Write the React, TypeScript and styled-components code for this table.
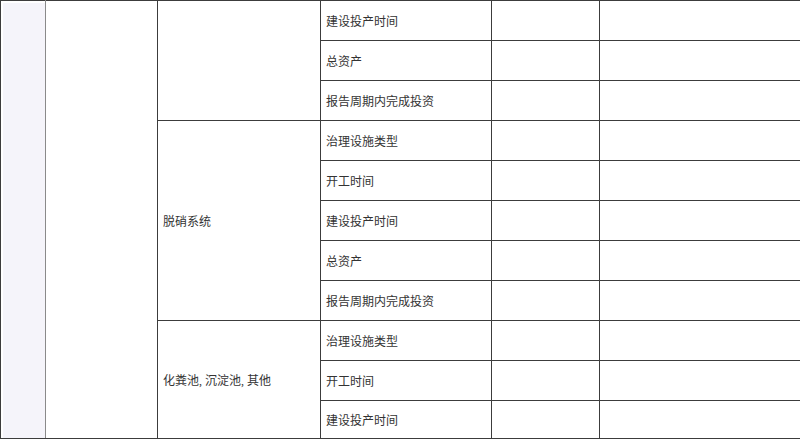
import React, {FC} from 'react';
import styled, {createGlobalStyle} from 'styled-components';

const GlobalStyle = createGlobalStyle`
    html, body {
        margin: 0;
        padding: 0;
        background: #fff;
    }
    body {
        font-family: "Liberation Serif", "Noto Sans CJK SC", serif;
    }
`;

const Page = styled.div`
    width: 800px;
    height: 440px;
    overflow: hidden;
`;

const Grid = styled.table`
    width: 800px;
    table-layout: fixed;
    border-collapse: collapse;
    border: 1px solid #3c3c3c;
    font-size: 12px;
    color: #333;
`;

const Col = styled.col<{$width: number}>`
    width: ${p => p.$width}px;
`;

const Row = styled.tr<{$last?: boolean}>`
    height: ${p => (p.$last ? 38 : 40)}px;
`;

const Cell = styled.td`
    border: 1px solid #3c3c3c;
    padding: 0 5px;
    vertical-align: middle;
    white-space: nowrap;
    font-weight: normal;
`;

const IndexCell = styled(Cell)`
    background: #f5f4fa;
    box-shadow: inset 1px 1px 0 1px #fff;
    border-right-color: #8a8a8a;
`;

type Group = {
    name: string;
    items: string[];
};

const columns = [45, 112, 163, 171, 108, 201];

const groups: Group[] = [
    {name: '', items: ['建设投产时间', '总资产', '报告周期内完成投资']},
    {name: '脱硝系统', items: ['治理设施类型', '开工时间', '建设投产时间', '总资产', '报告周期内完成投资']},
    {name: '化粪池, 沉淀池, 其他', items: ['治理设施类型', '开工时间', '建设投产时间']},
];

const totalRows = groups.reduce((sum, group) => sum + group.items.length, 0);

const App: FC = () => {
    let rowIndex = 0;

    return (
        <Page>
            <GlobalStyle />
            <Grid>
                <colgroup>
                    {columns.map((width, i) => (
                        <Col key={i} $width={width} />
                    ))}
                </colgroup>
                <tbody>
                    {groups.map(group =>
                        group.items.map((item, i) => {
                            const first = rowIndex === 0;
                            rowIndex += 1;
                            return (
                                <Row key={`${group.name}-${item}-${i}`} $last={rowIndex === totalRows}>
                                    {first && <IndexCell rowSpan={totalRows} />}
                                    {first && <Cell rowSpan={totalRows} />}
                                    {i === 0 && <Cell rowSpan={group.items.length}>{group.name}</Cell>}
                                    <Cell>{item}</Cell>
                                    <Cell />
                                    <Cell />
                                </Row>
                            );
                        }),
                    )}
                </tbody>
            </Grid>
        </Page>
    );
};

export default App;
